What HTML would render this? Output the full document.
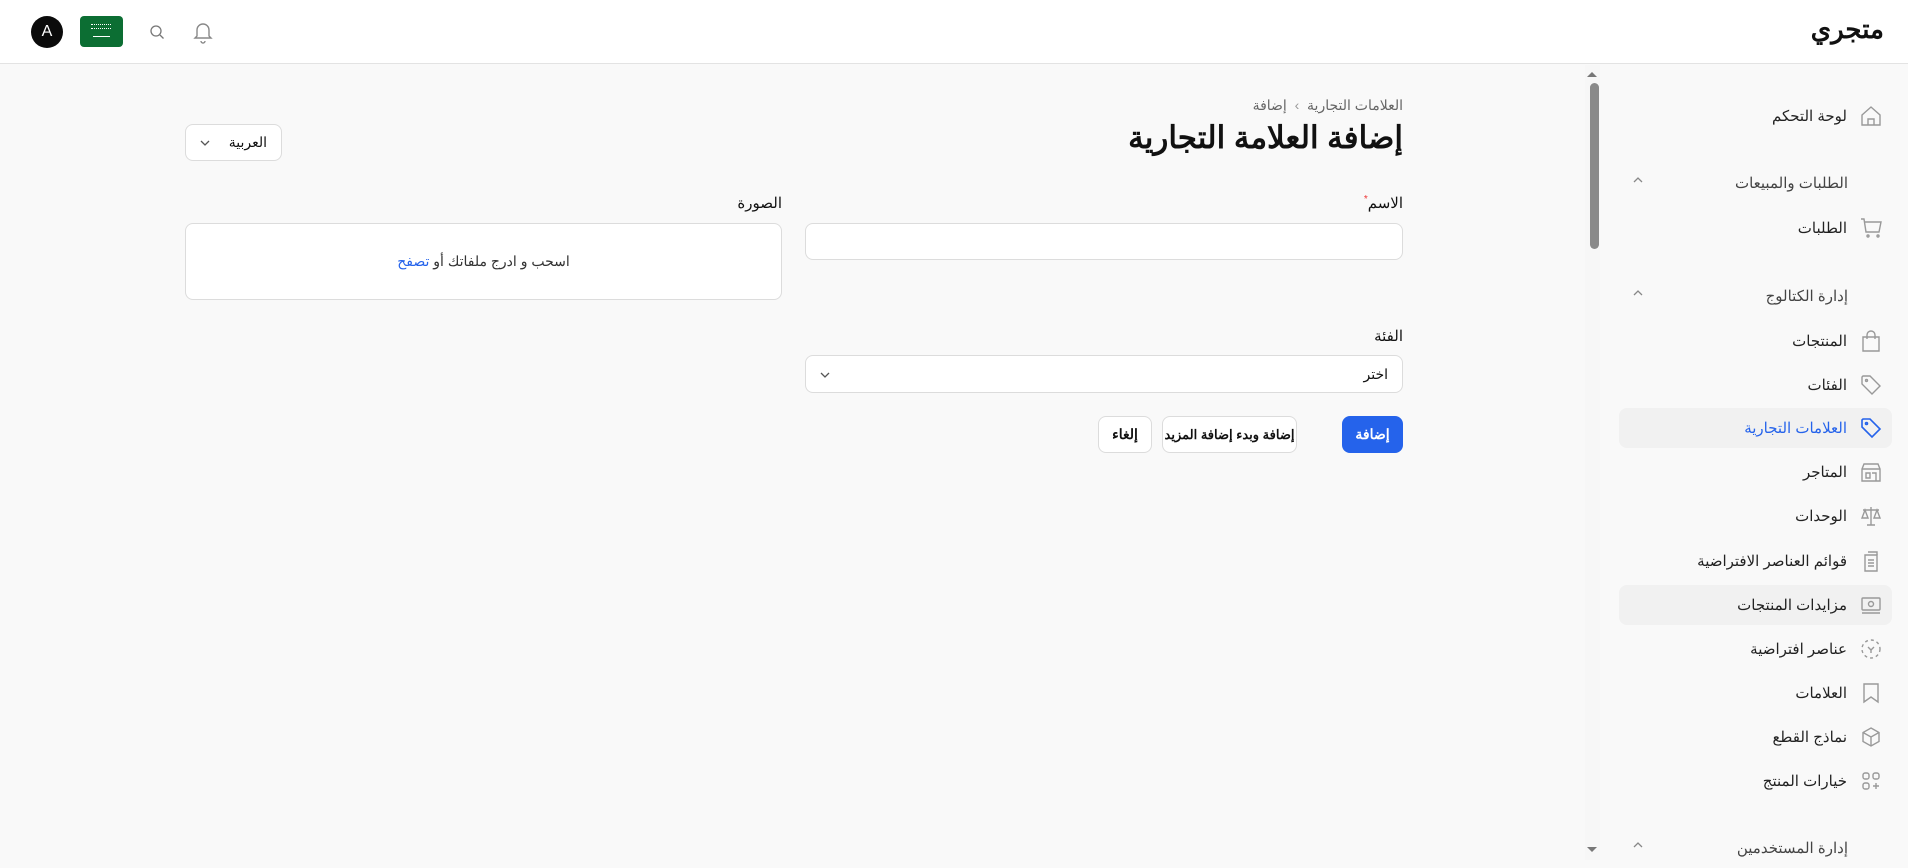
<!DOCTYPE html>
<html lang="ar" dir="rtl"><head><meta charset="utf-8">
<style>
*{box-sizing:border-box;margin:0;padding:0}
html,body{width:1908px;height:860px;overflow:hidden;background:#f9f9f9;font-family:"Liberation Sans","Noto Sans CJK SC",sans-serif;color:#111}
.a{position:absolute}
#hdr{left:0;top:0;width:1908px;height:64px;background:#fff;border-bottom:1px solid #e3e3e3}
.t{white-space:nowrap;direction:rtl}
.box{background:#fff;border:1px solid #dcdcdc;border-radius:8px}
.si{position:absolute;right:0;width:308px;height:40px}
.si .tx{position:absolute;right:61px;top:50%;transform:translateY(-50%);font-size:15px;color:#222;white-space:nowrap}
.si svg{position:absolute;left:259px;top:8px}
.sec .tx{color:#444;right:60px}
.sec .ch{position:absolute;left:32px;top:12px}
</style></head><body>
<div id="hdr" class="a">
  <div class="a" style="left:31px;top:16px;width:32px;height:32px;border-radius:50%;background:#0b0b0b;color:#fff;font-size:16px;text-align:center;line-height:32px;direction:ltr">A</div>
  <div class="a" style="left:80px;top:16px;width:43px;height:31px;border-radius:4px;background:#0c6e33">
    <div class="a" style="left:11px;top:8px;width:20px;height:5px;border-top:1px dotted #fff;border-bottom:1px dotted #fff"></div>
    <div class="a" style="left:13px;top:20px;width:17px;height:1px;background:#fff"></div>
  </div>
  <svg class="a" style="left:149px;top:24px" width="16" height="16" viewBox="0 0 16 16" fill="none" stroke="#777" stroke-width="1.3"><circle cx="7" cy="7" r="5"/><path d="M11 11l3.5 3.5"/></svg>
  <svg class="a" style="left:193px;top:20px" width="20" height="24" viewBox="0 0 20 24" fill="none" stroke="#888" stroke-width="1.4"><path d="M4 16V10a6 6 0 0 1 12 0v6l2 2H2z"/><path d="M8 21a2 2 0 0 0 4 0"/></svg>
  <div class="a t" style="right:24px;top:14px;font-size:26px;font-weight:bold;color:#111">متجري</div>
</div>

<div class="a t" style="right:505px;top:97px;font-size:14px;color:#666">العلامات التجارية&nbsp;&nbsp;<span style="color:#999">›</span>&nbsp;&nbsp;إضافة</div>
<div class="a t" style="right:505px;top:120px;font-size:31px;font-weight:bold;color:#111">إضافة العلامة التجارية</div>
<div class="a box" style="left:185px;top:124px;width:97px;height:37px">
  <div class="a t" style="right:14px;top:9px;font-size:14px">العربية</div>
  <svg class="a" style="left:14px;top:14px" width="10" height="8" viewBox="0 0 10 8" fill="none" stroke="#555" stroke-width="1.3"><path d="M1 2l4 4 4-4"/></svg>
</div>

<div class="a t" style="right:505px;top:194px;font-size:15px">الاسم<span style="color:#e33;font-size:10px;vertical-align:top">*</span></div>
<div class="a t" style="right:1126px;top:194px;font-size:15px">الصورة</div>
<div class="a box" style="left:805px;top:223px;width:598px;height:37px"></div>
<div class="a box" style="left:185px;top:223px;width:597px;height:77px">
  <div class="a t" style="left:0;right:0;top:29px;text-align:center;font-size:14px;color:#333">اسحب و ادرج ملفاتك أو <span style="color:#2563eb">تصفح</span></div>
</div>

<div class="a t" style="right:505px;top:327px;font-size:15px">الفئة</div>
<div class="a box" style="left:805px;top:355px;width:598px;height:38px">
  <div class="a t" style="right:14px;top:10px;font-size:14px">اختر</div>
  <svg class="a" style="left:14px;top:15px" width="10" height="8" viewBox="0 0 10 8" fill="none" stroke="#555" stroke-width="1.3"><path d="M1 2l4 4 4-4"/></svg>
</div>

<div class="a" style="left:1342px;top:416px;width:61px;height:37px;border-radius:8px;background:#2563eb;color:#fff;font-size:14px;font-weight:bold;text-align:center;line-height:37px">إضافة</div>
<div class="a box t" style="left:1162px;top:416px;width:135px;height:37px;font-size:13px;font-weight:bold;text-align:center;line-height:35px;padding:0;overflow:hidden">إضافة وبدء إضافة المزيد</div>
<div class="a box t" style="left:1098px;top:416px;width:54px;height:37px;font-size:14px;font-weight:bold;text-align:center;line-height:35px">إلغاء</div>

<div class="a" style="left:1585px;top:65px;width:15px;height:795px;background:#f7f7f7"></div>
<div class="a" style="left:1587px;top:72px;width:0;height:0;border-left:5px solid transparent;border-right:5px solid transparent;border-bottom:5px solid #777"></div>
<div class="a" style="left:1590px;top:83px;width:9px;height:166px;border-radius:5px;background:#8a8a8a"></div>
<div class="a" style="left:1587px;top:847px;width:0;height:0;border-left:5px solid transparent;border-right:5px solid transparent;border-top:5px solid #777"></div>

<div class="a" style="left:1600px;top:65px;width:308px;height:795px;background:#f9f9f9">
  <div class="si" style="top:31px"><span class="tx">لوحة التحكم</span>
    <svg width="24" height="24" viewBox="0 0 24 24" fill="none" stroke="#999" stroke-width="1.4"><path d="M3 11L12 3l9 8v10H3z"/><path d="M9 21v-6h6v6"/></svg></div>
  <div class="si sec" style="top:98px"><span class="tx">الطلبات والمبيعات</span>
    <svg class="ch" width="12" height="10" viewBox="0 0 12 10" fill="none" stroke="#888" stroke-width="1.3"><path d="M2 7l4-4 4 4"/></svg></div>
  <div class="si" style="top:143px"><span class="tx">الطلبات</span>
    <svg width="24" height="24" viewBox="0 0 24 24" fill="none" stroke="#999" stroke-width="1.4"><path d="M2 3h3l2 13h13l2-10H6"/><circle cx="9" cy="20" r="1"/><circle cx="19" cy="20" r="1"/></svg></div>
  <div class="si sec" style="top:211px"><span class="tx">إدارة الكتالوج</span>
    <svg class="ch" width="12" height="10" viewBox="0 0 12 10" fill="none" stroke="#888" stroke-width="1.3"><path d="M2 7l4-4 4 4"/></svg></div>
  <div class="si" style="top:256px"><span class="tx">المنتجات</span>
    <svg width="24" height="24" viewBox="0 0 24 24" fill="none" stroke="#999" stroke-width="1.4"><path d="M4 8h16v14H4z"/><path d="M8 10V6a4 4 0 0 1 8 0v4"/></svg></div>
  <div class="si" style="top:300px"><span class="tx">الفئات</span>
    <svg width="24" height="24" viewBox="0 0 24 24" fill="none" stroke="#999" stroke-width="1.4"><path d="M3 4v7l10 10 8-8L11 3H4z"/><circle cx="7.5" cy="7.5" r="1"/></svg></div>
  <div class="a" style="left:19px;top:343px;width:273px;height:40px;border-radius:8px;background:#f1f1f1"></div>
  <div class="si" style="top:343px"><span class="tx" style="color:#2563eb">العلامات التجارية</span>
    <svg width="24" height="24" viewBox="0 0 24 24" fill="none" stroke="#2563eb" stroke-width="1.6"><path d="M3 4v7l10 10 8-8L11 3H4z"/><circle cx="7.5" cy="7.5" r="1"/></svg></div>
  <div class="si" style="top:387px"><span class="tx">المتاجر</span>
    <svg width="24" height="24" viewBox="0 0 24 24" fill="none" stroke="#999" stroke-width="1.4"><path d="M3 9l2-5h14l2 5v12H3z"/><path d="M3 9h18M7 13h4v5H7zM13 13h4v8"/></svg></div>
  <div class="si" style="top:431px"><span class="tx">الوحدات</span>
    <svg width="24" height="24" viewBox="0 0 24 24" fill="none" stroke="#999" stroke-width="1.4"><path d="M12 3v18M4 6h16M8 21h8M6 6l-3 8h6zM18 6l-3 8h6z"/></svg></div>
  <div class="si" style="top:476px"><span class="tx">قوائم العناصر الافتراضية</span>
    <svg width="24" height="24" viewBox="0 0 24 24" fill="none" stroke="#999" stroke-width="1.4"><path d="M6 6h12v16H6z"/><path d="M9 3h9v3M9 11h6M9 14h6M9 17h6"/></svg></div>
  <div class="a" style="left:19px;top:520px;width:273px;height:40px;border-radius:8px;background:#f1f1f1"></div>
  <div class="si" style="top:520px"><span class="tx">مزايدات المنتجات</span>
    <svg width="24" height="24" viewBox="0 0 24 24" fill="none" stroke="#999" stroke-width="1.4"><rect x="3" y="5" width="18" height="12" rx="1"/><circle cx="12" cy="11" r="2.5"/><path d="M3 20h18"/></svg></div>
  <div class="si" style="top:564px"><span class="tx">عناصر افتراضية</span>
    <svg width="24" height="24" viewBox="0 0 24 24" fill="none" stroke="#999" stroke-width="1.4" stroke-dasharray="3 3"><circle cx="12" cy="12" r="9"/><path d="M9 10l3 3 3-3M12 13v3" stroke-dasharray="none"/></svg></div>
  <div class="si" style="top:608px"><span class="tx">العلامات</span>
    <svg width="24" height="24" viewBox="0 0 24 24" fill="none" stroke="#999" stroke-width="1.4"><path d="M5 3h14v18l-7-5-7 5z"/></svg></div>
  <div class="si" style="top:652px"><span class="tx">نماذج القطع</span>
    <svg width="24" height="24" viewBox="0 0 24 24" fill="none" stroke="#999" stroke-width="1.4"><path d="M12 3l8 4.5v9L12 21l-8-4.5v-9z"/><path d="M4 7.5l8 4.5 8-4.5M12 12v9"/></svg></div>
  <div class="si" style="top:696px"><span class="tx">خيارات المنتج</span>
    <svg width="24" height="24" viewBox="0 0 24 24" fill="none" stroke="#999" stroke-width="1.4"><rect x="4" y="4" width="6" height="6" rx="2"/><rect x="14" y="4" width="6" height="6" rx="2"/><rect x="4" y="14" width="6" height="6" rx="2"/><path d="M17 14v6M14 17h6"/></svg></div>
  <div class="si sec" style="top:763px"><span class="tx">إدارة المستخدمين</span>
    <svg class="ch" width="12" height="10" viewBox="0 0 12 10" fill="none" stroke="#888" stroke-width="1.3"><path d="M2 7l4-4 4 4"/></svg></div>
</div>
</body></html>
